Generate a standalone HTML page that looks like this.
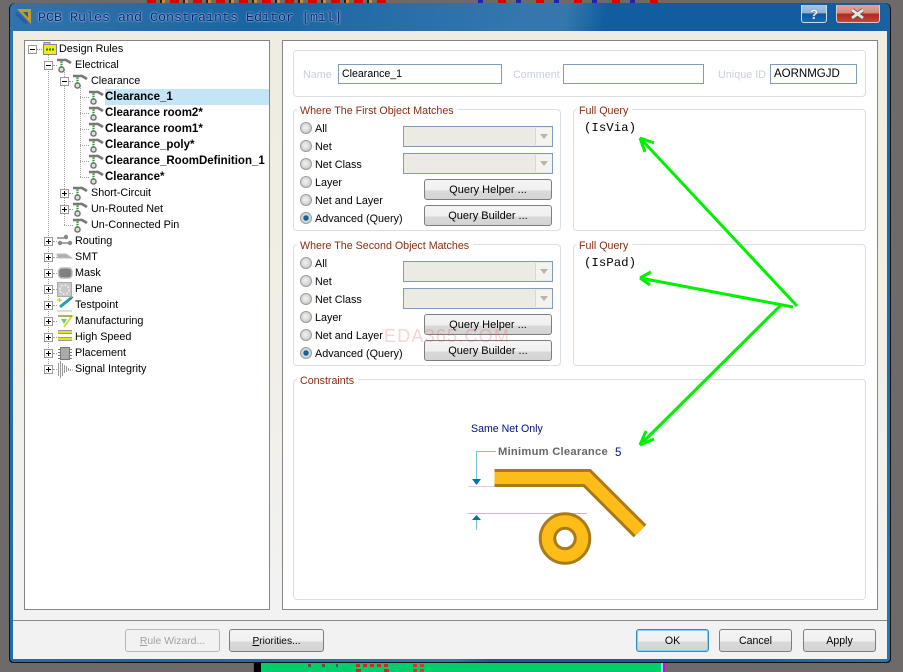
<!DOCTYPE html>
<html><head><meta charset="utf-8"><style>
html,body{margin:0;padding:0}
body{width:903px;height:672px;overflow:hidden;position:relative;background:#6e6a69;font-family:"Liberation Sans",sans-serif;font-size:10.8px;color:#000}
div,span,svg{position:absolute;box-sizing:border-box}
.t{white-space:nowrap;line-height:14px;height:14px;margin-top:1px}
.b{font-weight:bold;font-size:11.5px}
.exp{width:9px;height:9px;border:1px solid #9a9a9a;background:#fff;margin-top:1px}
.exp:before{content:"";position:absolute;left:1px;top:3px;width:5px;height:1px;background:#000}
.exp.p:after{content:"";position:absolute;left:3px;top:1px;width:1px;height:5px;background:#000}
.vd{width:1px;border-left:1px dotted #a0a0a0}
.hd{height:1px;border-top:1px dotted #a0a0a0}
.grp{border:1px solid #d8e0e6;border-radius:4px;background:#fff}
.lg{color:#8a2c10;background:#fff;padding:0 4px 0 3px;white-space:nowrap;line-height:14px;height:14px;font-size:10.7px;margin-top:1px}
.inp{border:1px solid #7f9db9;background:#fff;height:20px;line-height:19px;padding-left:3px;font-size:10.6px;white-space:nowrap}
.lb{color:#c6cfe0;white-space:nowrap;line-height:14px;font-size:10.8px;height:14px;margin-top:1px}
.r{width:12px;height:12px;border-radius:50%;border:1px solid #979f9f;background:radial-gradient(circle at 45% 45%,#ececea 15%,#d0d0cb 65%,#b4b4b0)}
.r.on{background:radial-gradient(circle at 50% 50%,#0c78c0 0,#0a5590 30%,#d7dbdc 45%,#c8c8c4)}
.cb{width:150px;height:21px;border:1px solid #7f9db9;background:#ebeae3}
.cb:after{content:"";position:absolute;right:0;top:1px;width:16px;height:17px;background:#f4f3ee;border-left:1px solid #d8d8d2}
.cb:before{content:"";position:absolute;right:4px;top:7px;z-index:2;border:4px solid transparent;border-top:5px solid #b6b6b0;border-bottom:0}
.btn{border:1px solid #7e7e7e;border-radius:3px;background:linear-gradient(#f4f4f4 0,#f0f0f0 54%,#d9d9d9 56%,#d4d4d4 100%);text-align:center;line-height:23px;font-size:10.6px;white-space:nowrap;height:23px}
.qb{width:128px;height:21px;line-height:21px;font-size:11px}
.q{font-family:"Liberation Mono",monospace;font-size:12.4px;line-height:14px;height:14px;white-space:nowrap;margin-top:1px}
</style></head><body>

<!-- strip behind window -->
<div style="left:147px;top:0;width:240px;height:3px;background:repeating-linear-gradient(90deg,#d00 0 9px,#6e6a69 9px 13px,#222 13px 15px,#c84 15px 18px,#6e6a69 18px 23px)"></div>
<div style="left:478px;top:0;width:190px;height:3px;background:repeating-linear-gradient(90deg,#22a 0 5px,#6e6a69 5px 20px,#d00 20px 28px,#6e6a69 28px 38px)"></div>
<div style="left:254px;top:663px;width:410px;height:9px;background:#00ce6a"></div>
<div style="left:254px;top:663px;width:7px;height:9px;background:#000"></div>
<div style="left:253px;top:663px;width:1px;height:9px;background:#e000e0"></div>
<div style="left:661px;top:663px;width:2px;height:9px;background:#7fe0f0"></div>
<div style="left:663px;top:663px;width:2px;height:9px;background:#e000e0"></div>
<div style="left:356px;top:664px;width:33px;height:3px;background:repeating-linear-gradient(90deg,#d22 0 4px,transparent 4px 7px)"></div>
<div style="left:356px;top:669px;width:5px;height:3px;background:#d22"></div>
<div style="left:384px;top:669px;width:5px;height:3px;background:#d22"></div>
<div style="left:413px;top:664px;width:12px;height:3px;background:repeating-linear-gradient(90deg,#e03030 0 4px,transparent 4px 7px)"></div>
<div style="left:413px;top:669px;width:12px;height:3px;background:repeating-linear-gradient(90deg,#e03030 0 4px,transparent 4px 7px)"></div>
<div style="left:308px;top:664px;width:30px;height:3px;background:repeating-linear-gradient(90deg,#555 0 3px,transparent 3px 14px)"></div>

<!-- window -->
<div style="left:9px;top:3px;width:882px;height:660px;background:#111;border-radius:6px 6px 4px 4px"></div>
<div style="left:10px;top:3px;width:880px;height:659px;border-radius:6px 6px 4px 4px;background:linear-gradient(100deg,#3273ac 0,#1a64a3 25%,#3577ad 52%,#3577ad 56%,#115da0 60%,#115da0 85%,#2f75ac 100%);"></div>
<div style="left:13px;top:31px;width:874px;height:628px;background:linear-gradient(#efece2 0,#f0eee6 50%,#f2f2f2 90%)"></div>
<div style="left:13px;top:620px;width:874px;height:1px;background:#8a8a8a"></div>
<div style="left:13px;top:621px;width:874px;height:38px;background:#f2f2f2"></div>

<!-- title -->
<svg style="left:15px;top:8px" width="18" height="18" viewBox="0 0 18 18"><path d="M2 1H16V16Z" fill="#c69a2a"/><path d="M8 4H13V9.5Z" fill="#1a64a3"/><path d="M1 5L12 15.5" stroke="#2a5da8" stroke-width="3" fill="none"/></svg>
<div class="t" style="left:38px;top:11px;font-family:'Liberation Mono',monospace;font-size:13.33px;color:#0a2270;text-shadow:0 0 2px #bcd8f0,0 0 1px #bcd8f0">PCB Rules and Constraints Editor [mil]</div>
<div style="left:801px;top:5px;width:26px;height:18px;border:1px solid #d0dce8;border-top:0;border-radius:0 0 3px 3px;background:linear-gradient(#a8c4de 0,#8fb2d2 48%,#0f5a9e 50%,#1b68ab 100%)"></div>
<div class="t" style="left:801px;top:6px;width:26px;text-align:center;color:#eee;font-weight:bold;font-size:14px;text-shadow:0 0 1px #333">?</div>
<div style="left:836px;top:5px;width:44px;height:18px;border:1px solid #d8c8c8;border-top:0;border-radius:0 0 3px 3px;background:linear-gradient(#dfa49a 0,#d38b7f 45%,#b3281c 55%,#c0483a 100%)"></div>
<svg style="left:850px;top:8px" width="16" height="12" viewBox="0 0 16 12"><path d="M2 2L13 10M13 2L2 10" stroke="#555" stroke-width="4.4" fill="none"/><path d="M2 2L13 10M13 2L2 10" stroke="#e4e4e4" stroke-width="2.8" fill="none"/></svg>

<!-- tree panel -->
<div style="left:24px;top:40px;width:246px;height:570px;background:#fff;border:1px solid #858585"></div>
<div style="left:105px;top:89px;width:164px;height:16px;background:#c4e5f6"></div>

<div class="vd" style="left:48px;top:54px;height:316px"></div>
<div class="hd" style="left:37px;top:49px;width:5px"></div>
<div class="vd" style="left:64px;top:70px;height:155px"></div>
<div class="vd" style="left:80px;top:86px;height:91px"></div>
<div class="hd" style="left:80px;top:97px;width:9px"></div>
<div class="hd" style="left:80px;top:113px;width:9px"></div>
<div class="hd" style="left:80px;top:129px;width:9px"></div>
<div class="hd" style="left:80px;top:145px;width:9px"></div>
<div class="hd" style="left:80px;top:161px;width:9px"></div>
<div class="hd" style="left:80px;top:177px;width:9px"></div>
<div class="hd" style="left:64px;top:225px;width:9px"></div>
<div class="hd" style="left:53px;top:65px;width:4px"></div>
<div class="hd" style="left:69px;top:81px;width:4px"></div>
<div class="hd" style="left:69px;top:193px;width:4px"></div>
<div class="hd" style="left:69px;top:209px;width:4px"></div>
<div class="hd" style="left:53px;top:241px;width:4px"></div>
<div class="hd" style="left:53px;top:257px;width:4px"></div>
<div class="hd" style="left:53px;top:273px;width:4px"></div>
<div class="hd" style="left:53px;top:289px;width:4px"></div>
<div class="hd" style="left:53px;top:305px;width:4px"></div>
<div class="hd" style="left:53px;top:321px;width:4px"></div>
<div class="hd" style="left:53px;top:337px;width:4px"></div>
<div class="hd" style="left:53px;top:353px;width:4px"></div>
<div class="hd" style="left:53px;top:369px;width:4px"></div>

<div class="exp" style="left:28px;top:44px"></div>
<div class="exp" style="left:44px;top:60px"></div>
<div class="exp" style="left:60px;top:76px"></div>
<div class="exp p" style="left:60px;top:188px"></div>
<div class="exp p" style="left:60px;top:204px"></div>
<div class="exp p" style="left:44px;top:236px"></div>
<div class="exp p" style="left:44px;top:252px"></div>
<div class="exp p" style="left:44px;top:268px"></div>
<div class="exp p" style="left:44px;top:284px"></div>
<div class="exp p" style="left:44px;top:300px"></div>
<div class="exp p" style="left:44px;top:316px"></div>
<div class="exp p" style="left:44px;top:332px"></div>
<div class="exp p" style="left:44px;top:348px"></div>
<div class="exp p" style="left:44px;top:364px"></div>

<svg style="left:0;top:0" width="300" height="400" viewBox="0 0 300 400">
<defs>
<g id="ru"><path d="M0 2H9L14 5" stroke="#777" stroke-width="2.6" fill="none"/><circle cx="4.5" cy="11.5" r="2.5" fill="#e4e4e4" stroke="#777" stroke-width="1.6"/><path d="M4.5 3.5V9" stroke="#2a9a3a" stroke-width="2.2" stroke-dasharray="1.4 .8"/></g>
</defs>
<rect x="43.5" y="44.5" width="13" height="10" fill="#f0ea20" stroke="#888"/><path d="M44 44V42.5H50V44" fill="#e8e020" stroke="#888"/><path d="M46 49.5H54" stroke="#2a7a20" stroke-width="2" stroke-dasharray="2 1"/>
<use href="#ru" x="57" y="58"/><use href="#ru" x="73" y="74"/>
<use href="#ru" x="89" y="90"/><use href="#ru" x="89" y="106"/><use href="#ru" x="89" y="122"/><use href="#ru" x="89" y="138"/><use href="#ru" x="89" y="154"/><use href="#ru" x="89" y="170"/>
<use href="#ru" x="73" y="186"/><use href="#ru" x="73" y="202"/><use href="#ru" x="73" y="218"/>
<!-- routing -->
<path d="M57 238H66M62 243H72" stroke="#888" stroke-width="1.4"/><circle cx="66" cy="237" r="2.2" fill="#888"/><circle cx="60" cy="243" r="2.2" fill="#888"/><circle cx="70" cy="243" r="2.2" fill="#888"/>
<!-- smt -->
<path d="M57 254H66L72 258H58Z" fill="#b0b0b0" stroke="#bbb"/>
<!-- mask -->
<rect x="58.5" y="268" width="13.5" height="10" rx="3.5" fill="#808080" stroke="#bbb" stroke-width="1.4"/>
<!-- plane -->
<rect x="57.5" y="282.5" width="14" height="14" fill="#c8c8c8" stroke="#aaa"/><circle cx="64.5" cy="289.5" r="4.5" fill="none" stroke="#eee" stroke-width="1.5" stroke-dasharray="2 1.5"/>
<!-- testpoint -->
<path d="M60 307L71 298" stroke="#20a0b0" stroke-width="3"/><path d="M70 299L73 297" stroke="#666" stroke-width="1.5"/><path d="M57 300H62M59.5 298V302" stroke="#d0d000" stroke-width="1.2"/><path d="M57 311H72" stroke="#bbb"/>
<!-- manufacturing -->
<path d="M58 316H72L64 327" fill="none" stroke="#d8d820" stroke-width="1.8"/><path d="M58 316H72" stroke="#666" stroke-width=".8"/><path d="M61 319H67L64 324Z" fill="#70c870"/>
<!-- high speed -->
<path d="M58 332H72M58 339H72" stroke="#777" stroke-width="3.6"/><path d="M58 332H72M58 339H72" stroke="#e8e020" stroke-width="2"/>
<!-- placement -->
<rect x="60.5" y="347.5" width="9" height="12" fill="#aaa" stroke="#777"/><path d="M58 349.5H60M58 352.5H60M58 355.5H60M58 358.5H60M70 349.5H72M70 352.5H72M70 355.5H72M70 358.5H72" stroke="#777"/>
<!-- SI -->
<path d="M58.5 363V376M60.5 361V378M62.5 363V376M64.5 365V373M66.5 366V372M68.5 368V371M70.5 369V371M72 370H73" stroke="#999" fill="none"/>
</svg>

<div class="t" style="left:59px;top:41px">Design Rules</div>
<div class="t" style="left:75px;top:57px">Electrical</div>
<div class="t" style="left:91px;top:73px">Clearance</div>
<div class="t b" style="left:105px;top:89px">Clearance_1</div>
<div class="t b" style="left:105px;top:105px">Clearance room2*</div>
<div class="t b" style="left:105px;top:121px">Clearance room1*</div>
<div class="t b" style="left:105px;top:137px">Clearance_poly*</div>
<div class="t b" style="left:105px;top:153px">Clearance_RoomDefinition_1</div>
<div class="t b" style="left:105px;top:169px">Clearance*</div>
<div class="t" style="left:91px;top:185px">Short-Circuit</div>
<div class="t" style="left:91px;top:201px">Un-Routed Net</div>
<div class="t" style="left:91px;top:217px">Un-Connected Pin</div>
<div class="t" style="left:75px;top:233px">Routing</div>
<div class="t" style="left:75px;top:249px">SMT</div>
<div class="t" style="left:75px;top:265px">Mask</div>
<div class="t" style="left:75px;top:281px">Plane</div>
<div class="t" style="left:75px;top:297px">Testpoint</div>
<div class="t" style="left:75px;top:313px">Manufacturing</div>
<div class="t" style="left:75px;top:329px">High Speed</div>
<div class="t" style="left:75px;top:345px">Placement</div>
<div class="t" style="left:75px;top:361px">Signal Integrity</div>

<!-- right panel -->
<div style="left:282px;top:40px;width:596px;height:570px;background:#fff;border:1px solid #858585"></div>
<div class="grp" style="left:293px;top:50px;width:573px;height:47px"></div>
<div class="lb" style="left:303px;top:67px">Name</div>
<div class="inp" style="left:338px;top:64px;width:164px">Clearance_1</div>
<div class="lb" style="left:513px;top:67px">Comment</div>
<div class="inp" style="left:563px;top:64px;width:141px"></div>
<div class="lb" style="left:718px;top:67px">Unique ID</div>
<div class="inp" style="left:770px;top:64px;width:87px;font-size:11.5px">AORNMGJD</div>

<!-- group 1 -->
<div class="grp" style="left:293px;top:109px;width:268px;height:122px"></div>
<div class="lg" style="left:297px;top:103px">Where The First Object Matches</div>
<div class="r" style="left:300px;top:122px"></div><div class="t" style="left:315px;top:121px">All</div>
<div class="r" style="left:300px;top:140px"></div><div class="t" style="left:315px;top:139px">Net</div>
<div class="r" style="left:300px;top:158px"></div><div class="t" style="left:315px;top:157px">Net Class</div>
<div class="r" style="left:300px;top:176px"></div><div class="t" style="left:315px;top:175px">Layer</div>
<div class="r" style="left:300px;top:194px"></div><div class="t" style="left:315px;top:193px">Net and Layer</div>
<div class="r on" style="left:300px;top:212px"></div><div class="t" style="left:315px;top:211px">Advanced (Query)</div>
<div class="cb" style="left:403px;top:126px"></div>
<div class="cb" style="left:403px;top:153px"></div>
<div class="btn qb" style="left:424px;top:179px">Query Helper ...</div>
<div class="btn qb" style="left:424px;top:205px">Query Builder ...</div>

<!-- FQ1 -->
<div class="grp" style="left:573px;top:109px;width:293px;height:122px"></div>
<div class="lg" style="left:576px;top:103px">Full Query</div>
<div class="q" style="left:584px;top:120px">(IsVia)</div>

<!-- group 2 -->
<div class="grp" style="left:293px;top:244px;width:268px;height:122px"></div>
<div class="lg" style="left:297px;top:238px">Where The Second Object Matches</div>
<div class="r" style="left:300px;top:257px"></div><div class="t" style="left:315px;top:256px">All</div>
<div class="r" style="left:300px;top:275px"></div><div class="t" style="left:315px;top:274px">Net</div>
<div class="r" style="left:300px;top:293px"></div><div class="t" style="left:315px;top:292px">Net Class</div>
<div class="r" style="left:300px;top:311px"></div><div class="t" style="left:315px;top:310px">Layer</div>
<div class="r" style="left:300px;top:329px"></div><div class="t" style="left:315px;top:328px">Net and Layer</div>
<div class="r on" style="left:300px;top:347px"></div><div class="t" style="left:315px;top:346px">Advanced (Query)</div>
<div class="cb" style="left:403px;top:261px"></div>
<div class="cb" style="left:403px;top:288px"></div>
<div class="btn qb" style="left:424px;top:314px">Query Helper ...</div>
<div class="btn qb" style="left:424px;top:340px">Query Builder ...</div>
<div class="t" style="left:384px;top:325px;font-size:18px;line-height:20px;height:20px;color:rgba(225,80,70,.25);letter-spacing:1.2px">EDA365.COM</div>

<!-- FQ2 -->
<div class="grp" style="left:573px;top:244px;width:293px;height:122px"></div>
<div class="lg" style="left:576px;top:238px">Full Query</div>
<div class="q" style="left:584px;top:255px">(IsPad)</div>

<!-- constraints -->
<div class="grp" style="left:293px;top:379px;width:573px;height:221px"></div>
<div class="lg" style="left:297px;top:373px">Constraints</div>

<div class="t" style="left:471px;top:421px;color:#000f80;font-size:10.6px">Same Net Only</div>
<div class="t" style="left:498px;top:444px;color:#666;font-weight:bold;font-size:11.2px;letter-spacing:.25px">Minimum Clearance</div>
<div class="t" style="left:615px;top:445px;color:#000f80;font-size:11.5px">5</div>

<svg style="left:450px;top:410px" width="210" height="170" viewBox="0 0 210 170">
<path d="M46 41.5H26.5V69" stroke="#7cc0d8" fill="none"/>
<path d="M22 69H31L26.5 75Z" fill="#0870a8"/>
<path d="M18 76.5H135" stroke="#e6c8e6"/>
<path d="M18 103.5H137" stroke="#cdb4d8"/>
<path d="M22 110H31L26.5 105Z" fill="#0870a8"/>
<path d="M26.5 110V120" stroke="#7cc0d8"/>
<path d="M44.5 68H137L190 121" fill="none" stroke="#a87a18" stroke-width="18"/>
<path d="M44.5 68H137L190 121" fill="none" stroke="#fdbd18" stroke-width="12"/>
<circle cx="115" cy="128.5" r="17.5" fill="none" stroke="#a87a18" stroke-width="17.5"/>
<circle cx="115" cy="128.5" r="17.5" fill="none" stroke="#fdbd18" stroke-width="11.5"/>
</svg>

<!-- green arrows -->
<svg style="left:0;top:0" width="903" height="672" viewBox="0 0 903 672">
<g stroke="#00f000" stroke-width="3" fill="none">
<path d="M797 306L640 138"/><path d="M640 138L654 143M640 138L645 152"/>
<path d="M793 307L640 278"/><path d="M640 278L651 272M640 278L650 285"/>
<path d="M782 304L640 445"/><path d="M640 445L654 439M640 445L646 431"/>
</g>
</svg>

<!-- bottom buttons -->
<div class="btn" style="left:125px;top:629px;width:95px;color:#a0a0a0;border-color:#b8b8b8;background:#f2f2f2;font-size:10.4px"><u>R</u>ule Wizard...</div>
<div class="btn" style="left:229px;top:629px;width:95px;font-size:10.2px"><u>P</u>riorities...</div>
<div class="btn" style="left:636px;top:629px;width:73px;border-color:#2c8fc0;box-shadow:inset 0 0 0 1px #7fd4f4">OK</div>
<div class="btn" style="left:719px;top:629px;width:73px">Cancel</div>
<div class="btn" style="left:803px;top:629px;width:73px">Apply</div>
</body></html>
